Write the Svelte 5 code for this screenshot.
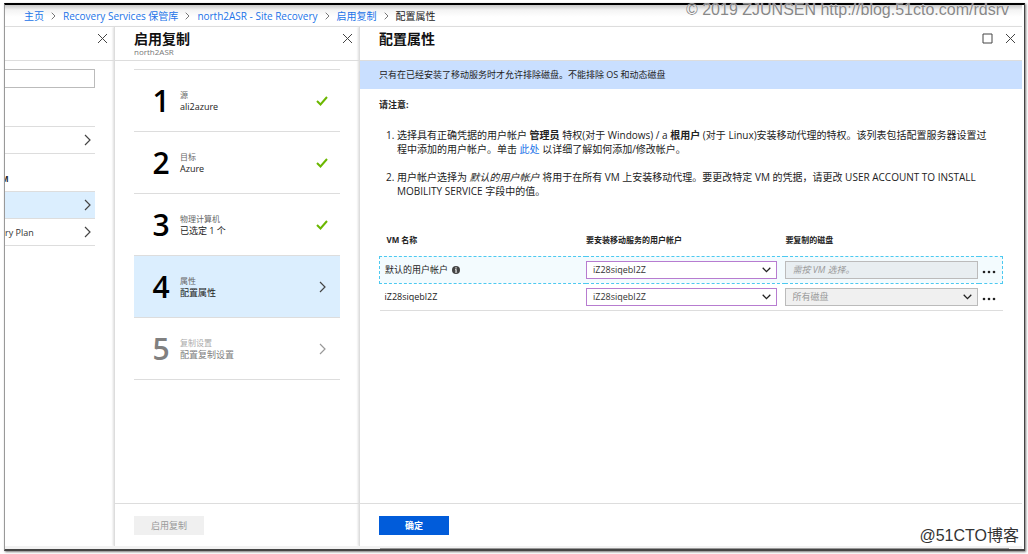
<script>
  const crumbs = ['主页', 'Recovery Services 保管库', 'north2ASR - Site Recovery', '启用复制'];

  const steps = [
    { label: '源', value: 'ali2azure', state: 'done' },
    { label: '目标', value: 'Azure', state: 'done' },
    { label: '物理计算机', value: '已选定 1 个', state: 'done' },
    { label: '属性', value: '配置属性', state: 'active' },
    { label: '复制设置', value: '配置复制设置', state: 'disabled' }
  ];

  let defaultAccount = $state('iZ28siqebl2Z');
  let vmAccount = $state('iZ28siqebl2Z');
</script>

{#snippet chevron()}
  <svg class="chevron" viewBox="0 0 7 12" aria-hidden="true"><path d="M1 1l5 5-5 5" /></svg>
{/snippet}

{#snippet closeIcon()}
  <svg class="close" viewBox="0 0 11 11" aria-hidden="true"><path d="M1 1l9 9M10 1l-9 9" /></svg>
{/snippet}

{#snippet arrow()}
  <svg class="arrow" viewBox="0 0 9 6" aria-hidden="true"><path d="M.7 .8l3.8 3.8L8.300 .8" /></svg>
{/snippet}

{#snippet more()}
  <button class="more" aria-label="更多">
    <svg viewBox="0 0 14 4" aria-hidden="true">
      <circle cx="2" cy="2" r="1.300" /><circle cx="7" cy="2" r="1.300" /><circle cx="12" cy="2" r="1.300" />
    </svg>
  </button>
{/snippet}

<div class="page">
  <div class="portal">
    <nav class="crumbs">
      {#each crumbs as crumb}
        <a href="#top">{crumb}</a>
        <svg viewBox="0 0 5 8" aria-hidden="true"><path d="M.7 .7L4 4 .7 7.300" /></svg>
      {/each}
      <span>配置属性</span>
    </nav>

    <div class="blades">
      <section class="blade menu">
        <header>
          <button class="icon" aria-label="关闭">{@render closeIcon()}</button>
        </header>
        <div class="menu-body">
          <input type="text" aria-label="搜索" />
          <a class="item first" href="#step1"><span></span>{@render chevron()}</a>
          <h3>M</h3>
          <a class="item selected" href="#step2"><span></span>{@render chevron()}</a>
          <a class="item" href="#plan"><span>ry Plan</span>{@render chevron()}</a>
        </div>
      </section>

      <section class="blade wizard">
        <header>
          <div>
            <h2>启用复制</h2>
            <p>north2ASR</p>
          </div>
          <button class="icon" aria-label="关闭">{@render closeIcon()}</button>
        </header>
        <ol class="steps">
          {#each steps as step, i}
            <li class={step.state}>
              <strong>{i + 1}</strong>
              <div class="text">
                <small>{step.label}</small>
                <span>{step.value}</span>
              </div>
              <div class="mark">
                {#if step.state === 'done'}
                  <svg class="check" viewBox="0 0 12 10" aria-hidden="true"><path d="M1 5l3.500 3.500L11 1" /></svg>
                {:else}
                  {@render chevron()}
                {/if}
              </div>
            </li>
          {/each}
        </ol>
        <footer><button class="action" disabled>启用复制</button></footer>
      </section>

      <section class="blade detail">
        <header>
          <h2>配置属性</h2>
          <div class="tools">
            <button class="icon" aria-label="最大化">
              <svg class="close" viewBox="0 0 11 11" aria-hidden="true"><path d="M1 1h9v9H1z" /></svg>
            </button>
            <button class="icon" aria-label="关闭">{@render closeIcon()}</button>
          </div>
        </header>
        <p class="banner">只有在已经安装了移动服务时才允许排除磁盘。不能排除 OS 和动态磁盘</p>
        <div class="content">
          <h3>请注意:</h3>
          <ol class="notes">
            <li>
              选择具有正确凭据的用户帐户 <b>管理员</b> 特权(对于 Windows) / a <b>根用户</b> (对于 Linux)安装移动代理的特权。该列表包括配置服务器设置过程中添加的用户帐户。单击 <a href="#help">此处</a> 以详细了解如何添加/修改帐户。
            </li>
            <li>
              用户帐户选择为 <i>默认的用户帐户</i> 将用于在所有 VM 上安装移动代理。要更改特定 VM 的凭据，请更改 USER ACCOUNT TO INSTALL MOBILITY SERVICE 字段中的值。
            </li>
          </ol>

          <table>
            <colgroup><col /><col class="account" /><col class="disk" /><col class="menu-col" /></colgroup>
            <thead>
              <tr>
                <th class="name">VM 名称</th>
                <th>要安装移动服务的用户帐户</th>
                <th>要复制的磁盘</th>
                <th></th>
              </tr>
            </thead>
            <tbody>
              <tr class="default">
                <td class="name">
                  默认的用户帐户
                  <svg class="info" viewBox="0 0 8 8" aria-hidden="true">
                    <circle cx="4" cy="4" r="4" /><path d="M3.400 1.300h1.200v1.200H3.400zM3 3.200h1.600v2.700h.5v.7H3v-.7h.500V3.900H3z" />
                  </svg>
                </td>
                <td>
                  <div class="picker">
                    <select bind:value={defaultAccount} aria-label="默认的用户帐户"><option>iZ28siqebl2Z</option></select>
                    {@render arrow()}
                  </div>
                </td>
                <td>
                  <div class="picker">
                    <input type="text" placeholder="需按 VM 选择。" aria-label="要复制的磁盘" disabled />
                  </div>
                </td>
                <td>{@render more()}</td>
              </tr>
              <tr>
                <td class="name">iZ28siqebl2Z</td>
                <td>
                  <div class="picker">
                    <select bind:value={vmAccount} aria-label="iZ28siqebl2Z 的用户帐户"><option>iZ28siqebl2Z</option></select>
                    {@render arrow()}
                  </div>
                </td>
                <td>
                  <div class="picker">
                    <select aria-label="iZ28siqebl2Z 的磁盘" disabled><option>所有磁盘</option></select>
                    {@render arrow()}
                  </div>
                </td>
                <td>{@render more()}</td>
              </tr>
            </tbody>
          </table>
        </div>
        <footer><button class="action primary">确定</button></footer>
      </section>
    </div>
    <div class="scroll"><div class="thumb"></div></div>
  </div>
  <div class="stamp top">© 2019 ZJUNSEN http://blog.51cto.com/rdsrv</div>
  <div class="stamp bottom">@51CTO博客</div>
</div>

<style>
  :global(body) {
    background: #fff;
    color: #222;
    font-family: 'Open Sans', 'Noto Sans CJK SC', sans-serif;
    font-size: 10px;
  }

  .page, .page * {
    box-sizing: border-box;
  }

  .page {
    position: relative;
    display: flex;
    min-height: 100vh;
    padding: 3px 3px 3px 4px;
  }

  .portal {
    flex: 1;
    display: flex;
    flex-direction: column;
    min-width: 0;
    padding-right: 2px;
    border: 1px solid #999;
    border-top: 2px solid #000;
    border-right-color: #444;
    border-bottom: 2px solid #444;
    box-shadow: 1px 1px 2px #777;
  }

  h2, h3, p, ol {
    margin: 0;
    padding: 0;
  }

  a {
    color: #1a73e8;
    text-decoration: none;
  }

  button, input, select {
    font: inherit;
  }

  svg {
    display: block;
    flex: none;
    fill: none;
    stroke: #444;
  }

  .crumbs {
    display: flex;
    align-items: center;
    gap: 7px;
    height: 22px;
    padding: 0 19px;
    border-bottom: 1px solid #ddd;
    background: linear-gradient(#c8c8c8, #f4f4f4 5px, #fff 12px);
    line-height: 14px;
    white-space: nowrap;
  }

  .crumbs svg {
    width: 5px;
    height: 8px;
    stroke: #777;
  }

  .blades {
    flex: 1;
    display: flex;
  }

  .blade {
    display: flex;
    flex-direction: column;
    background: #fff;
  }

  .blade + .blade {
    border-left: 1px solid #ddd;
    box-shadow: -1px 0 2px #ddd;
  }

  header {
    display: flex;
    justify-content: space-between;
    height: 34px;
    padding: 3px 6px 0 19px;
    border-bottom: 1px solid #ddd;
  }

  h2 {
    color: #111;
    font-size: 14px;
    line-height: 18px;
  }

  header p {
    color: #777;
    font-size: 8px;
    line-height: 8px;
  }

  .icon, .more {
    display: flex;
    align-items: center;
    height: 17px;
    padding: 0;
    border: 0;
    background: none;
  }

  .close {
    width: 11px;
    height: 11px;
  }

  .tools {
    display: flex;
    gap: 12px;
  }

  .chevron {
    width: 7px;
    height: 12px;
    stroke-width: 1.2;
  }

  .menu {
    flex: 0 0 109px;
  }

  .menu header {
    justify-content: flex-end;
  }

  .menu-body {
    padding: 8px 19px 0 0;
    overflow: hidden;
  }

  .menu-body input {
    display: block;
    width: 100%;
    height: 19px;
    border: 1px solid #bbb;
    border-left: 0;
  }

  .item {
    display: flex;
    align-items: center;
    justify-content: space-between;
    height: 27px;
    padding-right: 4px;
    border-bottom: 1px solid #ddd;
    color: #333;
    font-size: 9px;
  }

  .first {
    height: 28px;
    margin-top: 38px;
    border-top: 1px solid #ddd;
  }

  .menu h3 {
    height: 38px;
    padding-top: 19px;
    border-bottom: 1px solid #ddd;
    font-size: 8px;
    line-height: 12px;
    text-indent: -4px;
  }

  .selected {
    background: #dbeefe;
  }

  .wizard {
    flex: 0 0 245px;
  }

  .steps {
    flex: 1;
    padding: 8px 19px 0;
    list-style: none;
  }

  .steps li {
    display: flex;
    align-items: center;
    height: 62px;
    padding: 0 12px 0 8px;
    border-bottom: 1px solid #ddd;
  }

  .steps li:first-child {
    height: 63px;
    border-top: 1px solid #ddd;
  }

  .steps strong {
    width: 38px;
    color: #000;
    font-size: 30px;
    font-weight: 600;
    line-height: 40px;
    text-align: center;
  }

  .text {
    flex: 1;
    display: flex;
    flex-direction: column;
    font-size: 9px;
    line-height: 12px;
  }

  .text small {
    color: #666;
    font-size: 8px;
  }

  .mark {
    display: flex;
    justify-content: center;
    width: 12px;
  }

  .check {
    width: 12px;
    height: 10px;
    stroke: #6bb700;
    stroke-width: 2;
  }

  .active {
    background: #dbeefe;
  }

  .disabled strong, .disabled .text {
    color: #808080;
  }

  .disabled small {
    color: #aaa;
  }

  .disabled svg {
    stroke: #999;
  }

  footer {
    height: 43px;
    padding: 12px 19px 0;
    border-top: 1px solid #ddd;
  }

  .action {
    display: block;
    width: 70px;
    height: 19px;
    padding: 0;
    border: 0;
    background: #f0f0f0;
    color: #999;
    font-size: 9px;
    line-height: 19px;
  }

  .primary {
    background: #015cda;
    color: #fff;
    font-weight: 700;
  }

  .detail {
    flex: 1;
    min-width: 0;
  }

  .banner {
    padding: 0 19px;
    background: #c9dfff;
    font-size: 9px;
    line-height: 28px;
  }

  .content {
    flex: 1;
    padding: 9px 19px 0;
  }

  .content h3 {
    font-size: 9px;
    line-height: 14px;
  }

  .notes {
    margin: 16px 0 26px;
    padding: 0 8px 0 18px;
    line-height: 14px;
  }

  .notes li + li {
    margin-top: 14px;
  }

  table {
    width: 100%;
    border-collapse: collapse;
    table-layout: fixed;
  }

  .account {
    width: 32%;
  }

  .disk {
    width: 31%;
  }

  .menu-col {
    width: 24px;
  }

  th, td {
    padding: 0;
    text-align: left;
  }

  th {
    height: 32px;
    font-size: 8px;
    line-height: 10px;
    vertical-align: middle;
  }

  th.name {
    padding-left: 7px;
  }

  td {
    height: 27px;
  }

  td.name {
    padding-left: 5px;
    font-size: 9px;
  }

  tbody tr {
    border-bottom: 1px solid #ddd;
  }

  tbody tr.default {
    border: 1px dashed #4cc9f0;
    background: #f3fbfe;
  }

  .info {
    display: inline-block;
    width: 8px;
    height: 8px;
    margin-left: 2px;
    vertical-align: -1px;
    stroke: none;
  }

  .info circle {
    fill: #444;
  }

  .info path {
    fill: #fff;
  }

  .picker {
    position: relative;
    width: 100%;
    padding-right: 8px;
  }

  td:nth-child(3) .picker {
    padding-right: 1px;
  }

  .picker select, .picker input {
    appearance: none;
    display: block;
    width: 100%;
    height: 18px;
    padding: 0 6px;
    border: 1px solid #b77cd0;
    border-radius: 0;
    background: #fff;
    color: #333;
    font-size: 9px;
    line-height: 16px;
  }

  .picker :disabled {
    border-color: #bbb;
    background: #f0f0f0;
    color: #999;
    opacity: 1;
  }

  .default .picker :disabled {
    background: #e8eef1;
  }

  .picker input::placeholder {
    color: #999;
    font-style: italic;
  }

  .arrow {
    position: absolute;
    top: 6px;
    right: 14px;
    width: 9px;
    height: 6px;
    stroke: #222;
    stroke-width: 1.3;
    pointer-events: none;
  }

  td:nth-child(3) .arrow {
    right: 7px;
  }

  .more {
    padding: 5px 0 0 3px;
  }

  .more svg {
    width: 14px;
    height: 4px;
    fill: #222;
    stroke: none;
  }

  .scroll {
    display: flex;
    align-items: flex-end;
    height: 3px;
    padding: 0 13px 0 375px;
    background: #f2f2f2;
  }

  .thumb {
    flex: 1;
    height: 1px;
    background: #999;
  }

  .stamp {
    position: absolute;
    font-family: 'Liberation Sans', 'Noto Sans CJK SC', sans-serif;
    font-size: 16px;
    line-height: 20px;
    white-space: nowrap;
    pointer-events: none;
  }

  .top {
    top: 0;
    right: 19px;
    color: #888;
    text-shadow: 0 0 1px #fff;
  }

  .bottom {
    right: 9px;
    bottom: 8px;
    color: #333;
  }
</style>
